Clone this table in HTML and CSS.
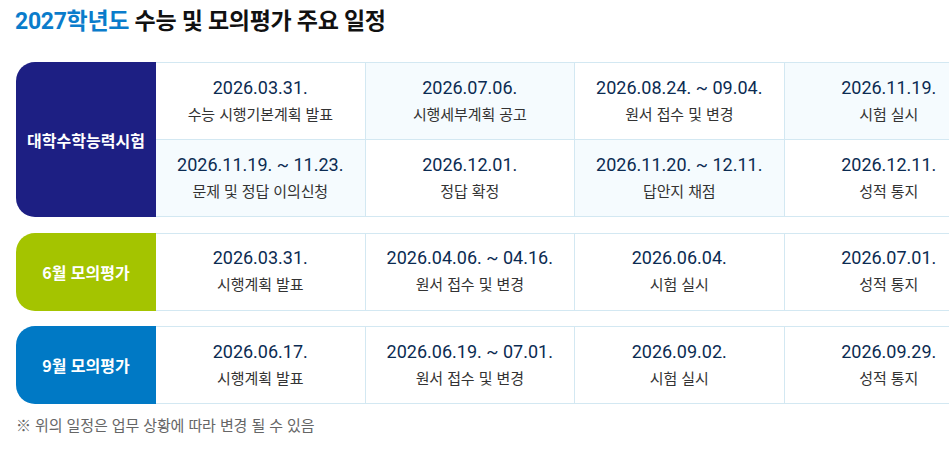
FILE: index.html
```html
<!DOCTYPE html>
<html lang="ko">
<head>
<meta charset="utf-8">
<title>2027학년도 수능 및 모의평가 주요 일정</title>
<link rel="stylesheet" href="styles.css">
</head>
<body>
<div class="page">
  <h2 class="title"><span class="year">2027학년도</span> 수능 및 모의평가 주요 일정</h2>

  <div class="viewport">
    <div class="schedule">
      <div class="group">
        <div class="label label-navy">대학수학능력시험</div>
        <div class="grid">
          <div class="cell"><div class="date">2026.03.31.</div><div class="desc">수능 시행기본계획 발표</div></div>
          <div class="cell alt"><div class="date">2026.07.06.</div><div class="desc">시행세부계획 공고</div></div>
          <div class="cell"><div class="date">2026.08.24. ~ 09.04.</div><div class="desc">원서 접수 및 변경</div></div>
          <div class="cell alt"><div class="date">2026.11.19.</div><div class="desc">시험 실시</div></div>
          <div class="cell alt"><div class="date">2026.11.19. ~ 11.23.</div><div class="desc">문제 및 정답 이의신청</div></div>
          <div class="cell"><div class="date">2026.12.01.</div><div class="desc">정답 확정</div></div>
          <div class="cell alt"><div class="date">2026.11.20. ~ 12.11.</div><div class="desc">답안지 채점</div></div>
          <div class="cell"><div class="date">2026.12.11.</div><div class="desc">성적 통지</div></div>
        </div>
      </div>

      <div class="group">
        <div class="label label-green">6월 모의평가</div>
        <div class="grid">
          <div class="cell"><div class="date">2026.03.31.</div><div class="desc">시행계획 발표</div></div>
          <div class="cell"><div class="date">2026.04.06. ~ 04.16.</div><div class="desc">원서 접수 및 변경</div></div>
          <div class="cell"><div class="date">2026.06.04.</div><div class="desc">시험 실시</div></div>
          <div class="cell"><div class="date">2026.07.01.</div><div class="desc">성적 통지</div></div>
        </div>
      </div>

      <div class="group">
        <div class="label label-blue">9월 모의평가</div>
        <div class="grid">
          <div class="cell"><div class="date">2026.06.17.</div><div class="desc">시행계획 발표</div></div>
          <div class="cell"><div class="date">2026.06.19. ~ 07.01.</div><div class="desc">원서 접수 및 변경</div></div>
          <div class="cell"><div class="date">2026.09.02.</div><div class="desc">시험 실시</div></div>
          <div class="cell"><div class="date">2026.09.29.</div><div class="desc">성적 통지</div></div>
        </div>
      </div>
    </div>
  </div>

  <p class="note">※ 위의 일정은 업무 상황에 따라 변경 될 수 있음</p>
</div>
</body>
</html>
```

FILE: styles.css
```css
html, body {
  margin: 0;
  padding: 0;
  background: #ffffff;
  overflow: hidden;
}

body {
  font-family: Roboto, "Noto Sans CJK KR", sans-serif;
  color: #333333;
}

.page {
  padding: 0 0 0 16px;
}

.title {
  margin: 6px 0 24px -1px;
  font-size: 23px;
  line-height: 32px;
  font-weight: 700;
  color: #111111;
  letter-spacing: -0.3px;
}

.year {
  color: #0a7ccb;
}

.viewport {
  width: 933px;
  overflow: hidden;
}

.schedule {
  width: 980px;
  display: flex;
  flex-direction: column;
  gap: 15.5px;
}

.group {
  display: flex;
}

.label {
  flex: 0 0 140px;
  display: flex;
  align-items: center;
  justify-content: center;
  border-radius: 19px 0 0 19px;
  color: #ffffff;
  font-family: "Noto Sans CJK KR", sans-serif;
  font-size: 16px;
  font-weight: 700;
  letter-spacing: 0;
}

.label-navy { background: #1d1f83; }
.label-green { background: #a4c400; }
.label-blue { background: #0079c5; }

.grid {
  flex: 1;
  display: grid;
  grid-template-columns: repeat(4, 209.5px);
  border-top: 1px solid #d3e8f2;
}

.cell {
  display: flex;
  flex-direction: column;
  align-items: center;
  justify-content: center;
  padding-bottom: 3px;
  box-sizing: border-box;
  height: 77px;
  border-bottom: 1px solid #d3e8f2;
  border-right: 1px solid #d3e8f2;
  background: #ffffff;
}

.cell.alt {
  background: #f5fbfe;
}

.date {
  font-family: Roboto, "Noto Sans CJK KR", sans-serif;
  font-size: 18px;
  line-height: 24px;
  color: #0b2b52;
}

.desc {
  margin-top: 3px;
  font-family: "Noto Sans CJK KR", sans-serif;
  font-size: 15px;
  line-height: 21px;
  color: #333333;
  letter-spacing: -0.1px;
}

.note {
  margin: 11px 0 0 0;
  font-family: "Noto Sans CJK KR", sans-serif;
  font-size: 15px;
  line-height: 20px;
  color: #666666;
  letter-spacing: -0.1px;
}
```
